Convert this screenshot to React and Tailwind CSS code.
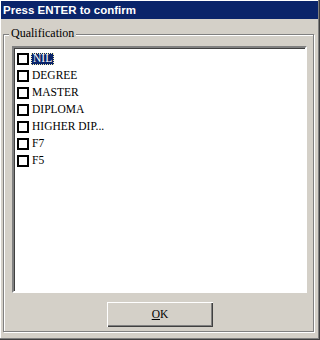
import React from "react";

const items = ["NIL", "DEGREE", "MASTER", "DIPLOMA", "HIGHER DIP...", "F7", "F5"];

const App = () => {
  return (
    <div className="w-[320px] h-[340px] bg-[#d4d0c8] pt-[1px] pl-[1px] pr-[2px] shadow-[inset_-1px_-1px_0_#404040,inset_-2px_-2px_0_#808080,inset_1px_1px_0_#ffffff] font-['Liberation_Serif',serif]">

      {/* title bar */}
      <div className="h-[18px] bg-[#0a246a] flex items-center pl-[2px] pt-[1px]">
        <span className="text-white font-bold text-[11.5px] font-['Liberation_Sans',Arial,sans-serif]">
          Press ENTER to confirm
        </span>
      </div>

      {/* group box */}
      <div className="relative mt-[15px] ml-[2px] w-[311px] h-[298px] border border-[#808080] shadow-[inset_1px_1px_0_#ffffff,1px_1px_0_#ffffff] pt-[11px] pl-[8px] flex flex-col">
        <span className="absolute -top-[9px] left-[5px] px-[2px] bg-[#d4d0c8] text-[12px] leading-[14px] text-black">
          Qualification
        </span>

        {/* list */}
        <div className="w-[295px] h-[247px] bg-white border-2 border-t-[#808080] border-l-[#808080] border-r-white border-b-white">
          <div className="h-full border-t border-l border-[#404040] pl-[2px] pt-[1px]">
            {items.map((item, i) => (
              <div key={i} className="h-[17px] flex items-center">
                <div className="w-[12px] h-[12px] border-2 border-black bg-white" />
                <span
                  className={
                    i === 0
                      ? "ml-[2px] px-[1px] h-[12px] flex items-center bg-[#0a246a] text-white border border-dotted border-[#f4eeb0] text-[11.5px]"
                      : "ml-[3px] h-[12px] flex items-center text-black text-[11.5px]"
                  }
                >
                  {item}
                </span>
              </div>
            ))}
          </div>
        </div>

        {/* ok button */}
        <div className="flex mt-[9px] pl-[95px]">
          <button className="w-[106px] h-[25px] bg-[#d4d0c8] shadow-[inset_1px_1px_0_#ffffff,inset_-1px_-1px_0_#404040,inset_-2px_-2px_0_#808080] text-[11.5px] text-black">
            <span className="underline">O</span>K
          </button>
        </div>
      </div>
    </div>
  );
};

export default App;
